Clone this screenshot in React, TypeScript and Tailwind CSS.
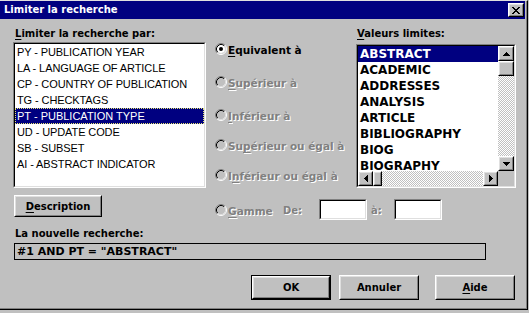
import React from "react";

// Win95-ish "Limiter la recherche" dialog

const disabledText = "text-[#808080] [text-shadow:1px_1px_0_#fff]";

const FIELDS = [
  "PY - PUBLICATION YEAR",
  "LA - LANGUAGE OF ARTICLE",
  "CP - COUNTRY OF PUBLICATION",
  "TG - CHECKTAGS",
  "PT - PUBLICATION TYPE",
  "UD - UPDATE CODE",
  "SB - SUBSET",
  "AI - ABSTRACT INDICATOR",
];

const VALUES = ["ABSTRACT", "ACADEMIC", "ADDRESSES", "ANALYSIS", "ARTICLE", "BIBLIOGRAPHY", "BIOG", "BIOGRAPHY"];

const Raised = ({ className = "", children }: { className?: string; children?: React.ReactNode }) => (
  <div className={`border border-t-white border-l-white border-r-black border-b-black bg-[#c0c0c0] ${className}`}>
    <div className="w-full h-full border border-t-[#dfdfdf] border-l-[#dfdfdf] border-r-[#808080] border-b-[#808080] flex items-center justify-center">
      {children}
    </div>
  </div>
);

const Sunken = ({ className = "", inner = "bg-white", children }: { className?: string; inner?: string; children?: React.ReactNode }) => (
  <div className={`border border-t-[#808080] border-l-[#808080] border-r-white border-b-white ${className}`}>
    <div className={`w-full h-full border border-t-black border-l-black border-r-[#dfdfdf] border-b-[#dfdfdf] ${inner}`}>
      {children}
    </div>
  </div>
);

// tiny pixel arrows for the scroll bars
const Arrow = ({ dir }: { dir: "up" | "down" | "left" | "right" }) => {
  const vertical = dir === "up" || dir === "down";
  const rot = { up: 0, down: 180, left: 0, right: 180 }[dir];
  return vertical ? (
    <svg width="7" height="4" viewBox="0 0 7 4" style={{ transform: `rotate(${rot}deg)` }}>
      <path d="M3 0H4V1H5V2H6V3H7V4H0V3H1V2H2V1H3Z" fill="#000" />
    </svg>
  ) : (
    <svg width="4" height="7" viewBox="0 0 4 7" style={{ transform: `rotate(${rot}deg)` }}>
      <path d="M3 0H4V7H3V6H2V5H1V4H0V3H1V2H2V1H3Z" fill="#000" />
    </svg>
  );
};

const CloseGlyph = () => {
  const rows = ["11000011", "01100110", "00111100", "00011000", "00111100", "01100110", "11000011"];
  return (
    <svg width="8" height="7" viewBox="0 0 8 7">
      {rows.map((r, y) =>
        r.split("").map((c, x) => (c === "1" ? <rect key={`${x}-${y}`} x={x} y={y} width="1" height="1" fill="#000" /> : null))
      )}
    </svg>
  );
};

const Radio = ({ checked = false, disabled = false }: { checked?: boolean; disabled?: boolean }) => (
  <svg width="12" height="12" viewBox="0 0 12 12" className="shrink-0">
    <circle cx="6" cy="6" r="4" fill={disabled ? "#c0c0c0" : "#fff"} />
    <path d="M2.11 9.89A5.5 5.5 0 0 1 9.89 2.11" fill="none" stroke="#808080" />
    <path d="M9.89 2.11A5.5 5.5 0 0 1 2.11 9.89" fill="none" stroke="#fff" />
    <path d="M2.82 9.18A4.5 4.5 0 0 1 9.18 2.82" fill="none" stroke="#000" />
    <path d="M9.18 2.82A4.5 4.5 0 0 1 2.82 9.18" fill="none" stroke="#dfdfdf" />
    {checked && <circle cx="6" cy="6" r="2" fill="#000" />}
  </svg>
);

const RadioRow = ({ label, u, rest, before = "", checked = false, disabled = false, className = "" }: {
  label?: string; u: string; rest: string; before?: string; checked?: boolean; disabled?: boolean; className?: string;
}) => (
  <div className={`h-4 flex items-center ${className}`}>
    <Radio checked={checked} disabled={disabled} />
    <span className={`ml-px text-[10.5px] leading-[14px] pt-[2px] whitespace-nowrap ${disabled ? disabledText : "text-black"}`}>
      {before}
      <span className="underline underline-offset-[2px]">{u}</span>
      {rest}
      {label}
    </span>
  </div>
);

const checker = "bg-[image:repeating-conic-gradient(#c0c0c0_0_25%,#fff_0_50%)] bg-[length:2px_2px]";

export default function App() {
  return (
    <div className="w-[529px] h-[313px] bg-[#c0c0c0] font-['DejaVu_Sans',sans-serif] font-bold text-[10px] text-black">
      <div className="w-[528px] h-[310px] border-t border-t-[#dfdfdf] border-r border-b border-r-black border-b-black">
        <div className="h-full border-r border-b border-r-[#808080] border-b-[#808080] pr-px flex flex-col">
          {/* Title bar */}
          <div className="h-[18px] shrink-0 bg-[#000080] flex items-center justify-between pl-[4px] pr-px">
            <span className="text-white text-[10px] leading-none">Limiter la recherche</span>
            <Raised className="w-4 h-[14px]">
              <CloseGlyph />
            </Raised>
          </div>

          {/* Top section */}
          <div className="flex items-start">
            {/* Field list */}
            <div className="ml-[13px] w-[193px] flex flex-col">
              <div className="mt-[8px] ml-[2px] leading-[13px]">
                <span className="underline underline-offset-[2px]">L</span>imiter la recherche par:
              </div>
              <Sunken className="mt-[2px] h-[146px]">
                <div className="flex flex-col font-['Liberation_Sans',sans-serif] font-normal text-[11px]">
                  {FIELDS.map((f) =>
                    f.startsWith("PT") ? (
                      <div key={f} className="h-4 leading-[14px] pl-px bg-[#000080] text-white border border-dotted border-[#e8e870]">
                        {f}
                      </div>
                    ) : (
                      <div key={f} className="h-4 leading-4 pl-[2px] tracking-[-0.1px]">
                        {f}
                      </div>
                    )
                  )}
                </div>
              </Sunken>
              <Raised className="mt-[7px] ml-px w-[88px] h-[22px]">
                <span>
                  <span className="underline underline-offset-[2px]">D</span>escription
                </span>
              </Raised>
            </div>

            {/* Operators + values */}
            <div className="ml-[9px] flex flex-col">
              <div className="flex">
                <div className="w-[141px] flex flex-col">
                  <RadioRow className="mt-[22px]" checked u="E" rest="quivalent à" />
                  <RadioRow className="mt-[17px]" disabled u="S" rest="upérieur à" />
                  <RadioRow className="mt-[17px]" disabled u="I" rest="nférieur à" />
                  <RadioRow className="mt-[14px]" disabled before="Su" u="p" rest="érieur ou égal à" />
                  <RadioRow className="mt-[14px]" disabled before="I" u="n" rest="férieur ou égal à" />
                </div>
                <div className="w-[160px] flex flex-col">
                  <div className="mt-[8px] ml-[1px] leading-[13px]">
                    <span className="underline underline-offset-[2px]">V</span>aleurs limites:
                  </div>
                  <Sunken className="mt-[4px] h-[144px]">
                    <div className="h-full flex flex-col">
                      <div className="flex flex-1 min-h-0">
                        <div className="flex-1 flex flex-col text-[12px]">
                          {VALUES.map((v, i) => (
                            <div
                              key={v}
                              className={`h-4 leading-4 pl-[2px] ${i === 0 ? "bg-[#000080] text-white" : ""}`}
                            >
                              {v}
                            </div>
                          ))}
                        </div>
                        <div className="w-4 flex flex-col">
                          <Raised className="h-[15px]"><Arrow dir="up" /></Raised>
                          <Raised className="h-[15px]" />
                          <div className={`flex-1 ${checker}`} />
                          <Raised className="h-[15px]"><Arrow dir="down" /></Raised>
                        </div>
                      </div>
                      <div className="h-[15px] flex">
                        <Raised className="w-[15px]"><Arrow dir="left" /></Raised>
                        <Raised className="w-[9px]" />
                        <div className={`flex-1 ${checker}`} />
                        <Raised className="w-[15px]"><Arrow dir="right" /></Raised>
                        <div className="w-4 bg-[#c0c0c0]" />
                      </div>
                    </div>
                  </Sunken>
                </div>
              </div>

              {/* Gamme row */}
              <div className="mt-[11px] h-[21px] flex items-center">
                <div className="w-[68px]">
                  <RadioRow disabled u="G" rest="amme" />
                </div>
                <div className={`w-[36px] pt-[2px] ${disabledText}`}>De:</div>
                <Sunken className="w-[48px] h-[21px]" />
                <div className={`ml-[4px] w-[23px] pt-[2px] ${disabledText}`}>à:</div>
                <Sunken className="w-[48px] h-[21px]" />
              </div>
            </div>
          </div>

          {/* New query */}
          <div className="mt-[7px] ml-[15px] leading-[13px]">La nouvelle recherche:</div>
          <div className="mt-[3px] ml-[14px] w-[472px] h-[17px] border border-black pl-[2px] text-[11px] leading-[15px]">
            #1 AND PT = "ABSTRACT"
          </div>

          {/* Buttons */}
          <div className="mt-[15px] flex justify-end pr-[10px]">
            <div className="border border-black">
              <Raised className="w-[78px] h-[23px]">OK</Raised>
            </div>
            <Raised className="ml-[8px] w-[80px] h-[25px]">Annuler</Raised>
            <Raised className="ml-[16px] w-[80px] h-[25px]">
              <span>
                <span className="underline underline-offset-[2px]">A</span>ide
              </span>
            </Raised>
          </div>
        </div>
      </div>
    </div>
  );
}
